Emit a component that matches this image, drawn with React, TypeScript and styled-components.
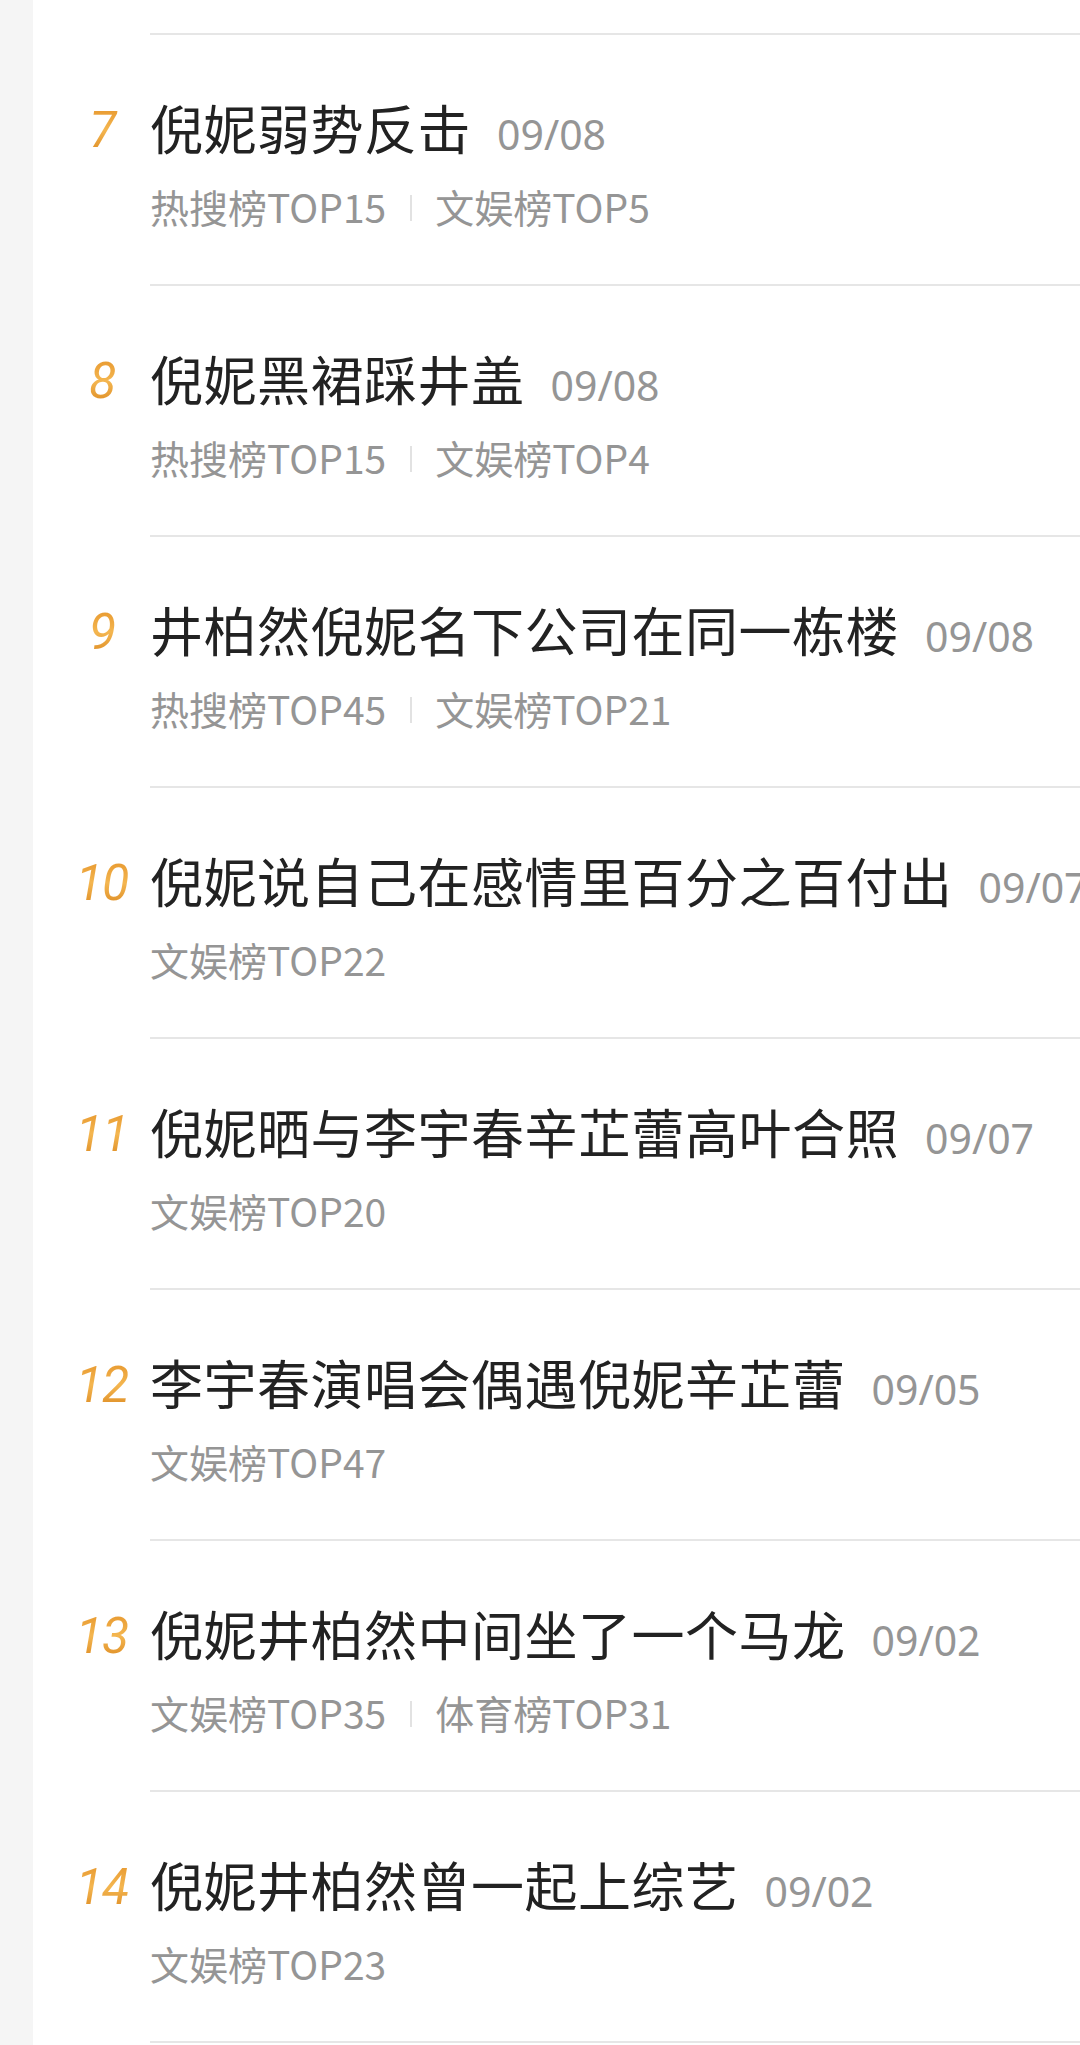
import React from "react"
import styled, { createGlobalStyle } from "styled-components"

interface HotItem {
  rank: number
  title: string
  date: string
  tags: string[]
}

const items: HotItem[] = [
  { rank: 7, title: "倪妮弱势反击", date: "09/08", tags: ["热搜榜TOP15", "文娱榜TOP5"] },
  { rank: 8, title: "倪妮黑裙踩井盖", date: "09/08", tags: ["热搜榜TOP15", "文娱榜TOP4"] },
  { rank: 9, title: "井柏然倪妮名下公司在同一栋楼", date: "09/08", tags: ["热搜榜TOP45", "文娱榜TOP21"] },
  { rank: 10, title: "倪妮说自己在感情里百分之百付出", date: "09/07", tags: ["文娱榜TOP22"] },
  { rank: 11, title: "倪妮晒与李宇春辛芷蕾高叶合照", date: "09/07", tags: ["文娱榜TOP20"] },
  { rank: 12, title: "李宇春演唱会偶遇倪妮辛芷蕾", date: "09/05", tags: ["文娱榜TOP47"] },
  { rank: 13, title: "倪妮井柏然中间坐了一个马龙", date: "09/02", tags: ["文娱榜TOP35", "体育榜TOP31"] },
  { rank: 14, title: "倪妮井柏然曾一起上综艺", date: "09/02", tags: ["文娱榜TOP23"] },
]

const GlobalStyle = createGlobalStyle`
  html, body {
    margin: 0;
    padding: 0;
    background: #ffffff;
  }
  body {
    font-family: "Noto Sans CJK SC", "Noto Sans", sans-serif;
    -webkit-font-smoothing: antialiased;
  }
`

const Page = styled.div`
  display: flex;
  width: 1080px;
  height: 2045px;
  overflow: hidden;
  background: #ffffff;
`

const SideStrip = styled.div`
  width: 33px;
  flex-shrink: 0;
  background: #f5f5f5;
`

const List = styled.div`
  flex: 1;
  display: flex;
  flex-direction: column;
  min-width: 0;
`

const Row = styled.div`
  display: flex;
  flex-shrink: 0;
`

const RankCol = styled.div<{ $tail?: boolean }>`
  width: 117px;
  flex-shrink: 0;
  padding: ${(p) => (p.$tail ? "0" : "65px 0 0 24px")};
  box-sizing: border-box;
  text-align: center;
`

const Rank = styled.span`
  display: inline-block;
  height: 60px;
  line-height: 60px;
  padding-right: 3px;
  font-family: Roboto, "Liberation Sans", sans-serif;
  font-style: italic;
  font-weight: 400;
  font-size: 50px;
  letter-spacing: -1px;
  background: linear-gradient(180deg, #e38f24 0%, #f4b650 50%, #d67f16 100%);
  -webkit-background-clip: text;
  background-clip: text;
  color: transparent;
`

const Content = styled.div<{ $tail?: boolean }>`
  flex: 1;
  min-width: 0;
  height: ${(p) => (p.$tail ? "35px" : "251px")};
  border-bottom: 2px solid #e6e6e6;
  padding-top: ${(p) => (p.$tail ? "0" : "62px")};
  box-sizing: border-box;
`

const TitleLine = styled.div`
  display: flex;
  align-items: baseline;
  height: 60px;
  white-space: nowrap;
`

const Title = styled.span`
  font-size: 53px;
  line-height: 60px;
  color: #222222;
  letter-spacing: 0.5px;
`

const DateText = styled.span`
  margin-left: 26px;
  font-family: "Noto Sans", "Noto Sans CJK SC", sans-serif;
  font-size: 41px;
  line-height: 60px;
  color: #959595;
  flex-shrink: 0;
`

const TagLine = styled.div`
  display: flex;
  align-items: center;
  height: 50px;
  margin-top: 24px;
  white-space: nowrap;
`

const Tag = styled.span`
  font-size: 39px;
  line-height: 50px;
  color: #959595;
`

const Sep = styled.span`
  width: 2px;
  height: 26px;
  margin: 4px 23px 0 24px;
  background: #e2e2e2;
`

const HotRow: React.FC<{ item: HotItem }> = ({ item }) => (
  <Row>
    <RankCol>
      <Rank>{item.rank}</Rank>
    </RankCol>
    <Content>
      <TitleLine>
        <Title>{item.title}</Title>
        <DateText>{item.date}</DateText>
      </TitleLine>
      <TagLine>
        {item.tags.map((tag, i) => (
          <React.Fragment key={tag}>
            {i > 0 && <Sep />}
            <Tag>{tag}</Tag>
          </React.Fragment>
        ))}
      </TagLine>
    </Content>
  </Row>
)

export default function App() {
  return (
    <>
      <GlobalStyle />
      <Page>
        <SideStrip />
        <List>
          <Row>
            <RankCol $tail />
            <Content $tail />
          </Row>
          {items.map((item) => (
            <HotRow key={item.rank} item={item} />
          ))}
        </List>
      </Page>
    </>
  )
}
